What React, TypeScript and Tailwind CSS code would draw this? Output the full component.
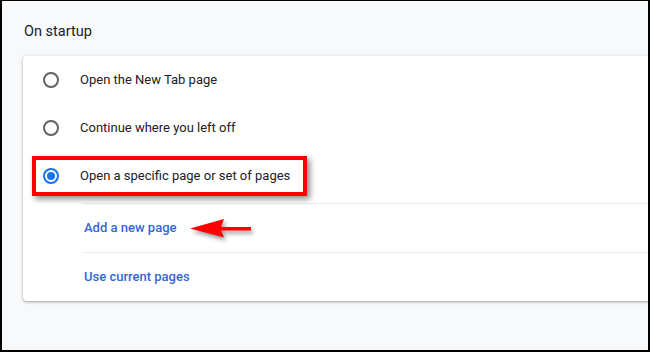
import React from "react";

const font = { fontFamily: "Roboto, 'Liberation Sans', Arial, sans-serif" };

function Radio({checked}: { checked?: boolean }) {
    return checked ? (
        <div className="w-4 h-4 rounded-full border-2 border-[#1a73e8] flex items-center justify-center shrink-0">
            <div className="w-2 h-2 rounded-full bg-[#1a73e8]"/>
        </div>
    ) : (
        <div className="w-4 h-4 rounded-full border-2 border-[#5f6368] shrink-0"/>
    );
}

function RadioRow({label, checked}: { label: string, checked?: boolean }) {
    return (
        <div className="h-[48px] flex items-center pl-[20px]">
            <Radio checked={checked}/>
            <span className="ml-[21px] text-[13px] text-[#202124]">{label}</span>
        </div>
    );
}

function LinkRow({label}: { label: string }) {
    return (
        <div className="h-[49px] ml-[60px] border-t border-[#e8eaed] flex items-center">
            <span className="ml-[1px] text-[13px] font-medium text-[#3367d6]">{label}</span>
        </div>
    );
}

export default function App() {
    return (
        <div style={font}
             className="relative w-[650px] h-[352px] border-2 border-t border-black bg-[#f8f9fa] overflow-hidden">
            <div className="h-[55px] pl-[22px] pt-[20px] text-[14.5px] text-[#202124]">On startup</div>
            <div className="ml-[21px] bg-white rounded-l-[4px] shadow-[0_1px_2px_rgba(60,64,67,0.3),0_1px_3px_1px_rgba(60,64,67,0.15)]">
                <div className="pb-[3px]">
                    <RadioRow label="Open the New Tab page"/>
                    <RadioRow label="Continue where you left off"/>
                    <RadioRow label="Open a specific page or set of pages" checked/>
                </div>
                <LinkRow label="Add a new page"/>
                <LinkRow label="Use current pages"/>
            </div>

            {/* annotation overlay */}
            <div
                className="absolute left-[30px] top-[155px] w-[275px] h-[40px] border-4 border-[#ff0000] shadow-[3px_3px_6px_rgba(0,0,0,0.45)]"/>
            <svg className="absolute left-[186px] top-[216px] drop-shadow-[2px_3px_2px_rgba(0,0,0,0.4)]"
                 width="66" height="24" viewBox="0 0 66 24">
                <path d="M2 11.5 L36 2 L33 10 L63 10 L63 13.5 L33 13.5 L36 20.5 Z" fill="#ff0000"/>
            </svg>
        </div>
    );
}
